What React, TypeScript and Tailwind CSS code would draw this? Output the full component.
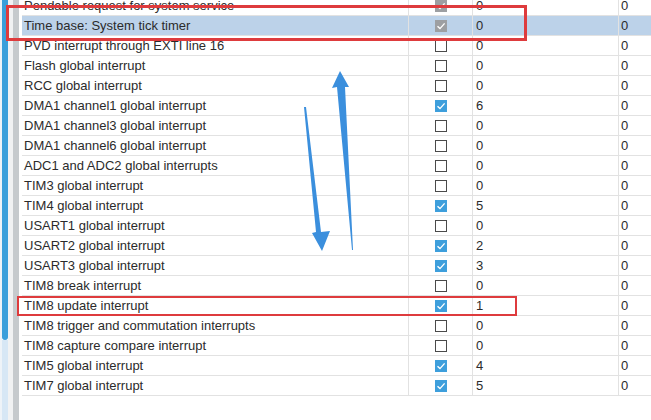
type Row = {
  name: string;
  state: 'off' | 'on' | 'locked';
  pre: number;
  sub: number;
  selected?: boolean;
};

const rows: Row[] = [
  { name: 'Pendable request for system service', state: 'locked', pre: 0, sub: 0 },
  { name: 'Time base: System tick timer', state: 'locked', pre: 0, sub: 0, selected: true },
  { name: 'PVD interrupt through EXTI line 16', state: 'off', pre: 0, sub: 0 },
  { name: 'Flash global interrupt', state: 'off', pre: 0, sub: 0 },
  { name: 'RCC global interrupt', state: 'off', pre: 0, sub: 0 },
  { name: 'DMA1 channel1 global interrupt', state: 'on', pre: 6, sub: 0 },
  { name: 'DMA1 channel3 global interrupt', state: 'off', pre: 0, sub: 0 },
  { name: 'DMA1 channel6 global interrupt', state: 'off', pre: 0, sub: 0 },
  { name: 'ADC1 and ADC2 global interrupts', state: 'off', pre: 0, sub: 0 },
  { name: 'TIM3 global interrupt', state: 'off', pre: 0, sub: 0 },
  { name: 'TIM4 global interrupt', state: 'on', pre: 5, sub: 0 },
  { name: 'USART1 global interrupt', state: 'off', pre: 0, sub: 0 },
  { name: 'USART2 global interrupt', state: 'on', pre: 2, sub: 0 },
  { name: 'USART3 global interrupt', state: 'on', pre: 3, sub: 0 },
  { name: 'TIM8 break interrupt', state: 'off', pre: 0, sub: 0 },
  { name: 'TIM8 update interrupt', state: 'on', pre: 1, sub: 0 },
  { name: 'TIM8 trigger and commutation interrupts', state: 'off', pre: 0, sub: 0 },
  { name: 'TIM8 capture compare interrupt', state: 'off', pre: 0, sub: 0 },
  { name: 'TIM5 global interrupt', state: 'on', pre: 4, sub: 0 },
  { name: 'TIM7 global interrupt', state: 'on', pre: 5, sub: 0 },
];

function Check({ state }: { state: Row['state'] }) {
  if (state === 'off') {
    return <div className="w-[12px] h-[12px] border border-[#4a4a4a] bg-white" />;
  }
  return (
    <div
      className={
        'w-[12px] h-[12px] flex items-center justify-center ' +
        (state === 'on' ? 'bg-[#3e9fdc]' : 'bg-[#9d9fa2]')
      }
    >
      <svg width="10" height="10" viewBox="0 0 10 10">
        <path d="M1.5 5.2 L4 7.6 L8.6 2.4" fill="none" stroke="white" strokeWidth="1.4" />
      </svg>
    </div>
  );
}

export default function App() {
  return (
    <div
      className="relative w-[651px] h-[420px] overflow-hidden bg-white flex text-[13px] text-[#2b2b2b]"
      style={{ fontFamily: '"Liberation Sans", Arial, sans-serif' }}
    >
      {/* scrollbar */}
      <div className="w-[2px] bg-[#eef3f8]" />
      <div className="w-[6px] flex flex-col">
        <div className="h-[340px] bg-[#3a9fdb] rounded-b-[3px]" />
        <div className="flex-1 bg-[#d7e7f5]" />
      </div>
      <div className="w-[5px] bg-[#f1f2f3]" />
      <div className="w-[6px] bg-[#c6cacd]" />
      <div className="w-[3px] bg-white" />

      {/* table */}
      <div className="flex-1 mt-[-4px]">
        {rows.map((r) => (
          <div
            key={r.name}
            className={
              'flex h-[20px] border-b border-[#e2e2e2] ' + (r.selected ? 'bg-[#bcd2e9]' : '')
            }
          >
            <div className="w-[387px] pl-[2px] flex items-center whitespace-nowrap overflow-hidden border-r border-[#e2e2e2]">
              {r.name}
            </div>
            <div className="w-[64px] flex items-center justify-center border-r border-[#e2e2e2]">
              <Check state={r.state} />
            </div>
            <div className="w-[146px] pl-[3px] flex items-center border-r border-[#e2e2e2]">
              {r.pre}
            </div>
            <div className="flex-1 pl-[2px] flex items-center">{r.sub}</div>
          </div>
        ))}
      </div>

      {/* annotations */}
      <div className="absolute left-[6px] top-[5px] w-[521px] h-[36px] border-[3px] border-[#de3b3d]" />
      <div className="absolute left-[17px] top-[296px] w-[500px] h-[20px] border-2 border-[#de3b3d]" />
      <svg className="absolute left-0 top-0" width="651" height="420">
        <polygon
          points="304,107 306,107 321,232 330,231 322,251 312,233 316,232"
          fill="#3b8fdd"
        />
        <polygon
          points="340,71 349,87 345,87 353,250 352,250 337,87 332,88"
          fill="#3b8fdd"
        />
      </svg>
    </div>
  );
}
